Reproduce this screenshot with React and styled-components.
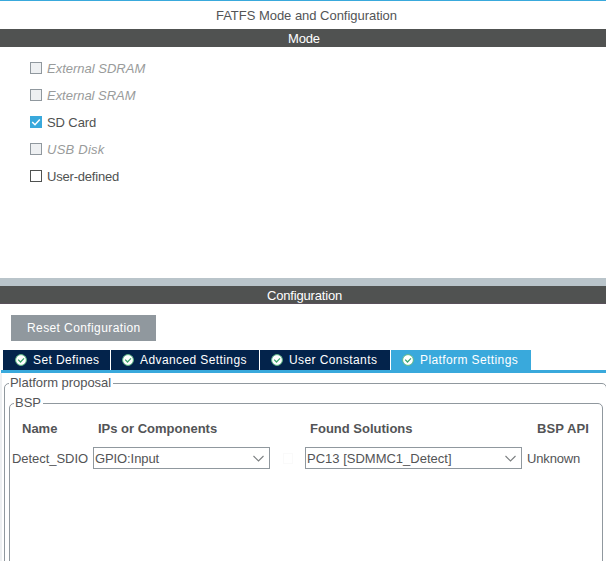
import React from 'react';
import styled, { createGlobalStyle } from 'styled-components';

const GlobalStyle = createGlobalStyle`
  * { box-sizing: border-box; }
  body {
    margin: 0;
    background: #fff;
    color: #535456;
    font: 13px/16px "Liberation Sans", Arial, sans-serif;
    overflow: hidden;
  }
`;

const Window = styled.main`
  display: flex;
  flex-direction: column;
  width: 606px;
  height: 561px;
  overflow: hidden;
  border-top: 1px solid #39a9dc;
  white-space: nowrap;
`;

const Text = styled.span`
  letter-spacing: ${(p) => p.$spacing || 0}px;
`;

const Title = styled.h1`
  margin: 0;
  height: 28px;
  padding: 7px 0 0 216px;
  font-size: 13px;
  font-weight: normal;
`;

const SectionBar = styled.h2`
  margin: 0;
  height: 18px;
  flex: none;
  padding-left: ${(p) => p.$indent}px;
  border-bottom: 1px solid ${(p) => p.$edge || '#505251'};
  background: #505251;
  color: #fff;
  font-size: 13px;
  line-height: 19px;
  font-weight: normal;
`;

const ModeList = styled.section`
  display: flex;
  flex-direction: column;
  height: 231px;
  padding: 8px 0 0 30px;
`;

const Option = styled.label`
  display: flex;
  align-items: center;
  gap: 5px;
  height: 27px;
  color: ${(p) => (p.$disabled ? '#999b9b' : '#505251')};
  font-style: ${(p) => (p.$disabled ? 'italic' : 'normal')};
`;

const Box = styled.span`
  display: flex;
  width: 12px;
  height: 12px;
  margin-bottom: 2px;
  border: 1px solid ${(p) => (p.$checked ? '#39a9dc' : p.$disabled ? '#90989e' : '#505251')};
  background: ${(p) => (p.$checked ? '#39a9dc' : p.$disabled ? '#eef0f2' : '#fff')};
`;

const Splitter = styled.div`
  height: 8px;
  flex: none;
  background: #b9c4ca;
`;

const ResetButton = styled.button`
  width: 145px;
  height: 26px;
  flex: none;
  margin: 11px 0 9px 11px;
  padding: 0 0 0 16px;
  border: 0;
  background: #90989e;
  color: #fff;
  font: 12px/27px "Liberation Sans", Arial, sans-serif;
  text-align: left;
`;

const Tabs = styled.nav`
  display: flex;
  gap: 1px;
  flex: none;
  height: 23px;
  margin-left: 1px;
  padding-left: 2px;
  border-bottom: 3px solid #39a9dc;
`;

const Tab = styled.div`
  display: flex;
  align-items: center;
  gap: 6px;
  width: ${(p) => p.$width}px;
  height: 20px;
  padding-left: 11px;
  background: ${(p) => (p.$active ? '#39a9dc' : '#03234b')};
  color: #fff;
  font-size: 12px;

  &:first-child {
    padding-left: 12px;
  }
`;

const Panel = styled.section`
  flex: 1;
  min-height: 0;
  width: 608px;
  padding: 2px 0 0 2px;
  border-left: 2px solid #eef0f2;
`;

const Group = styled.fieldset`
  min-width: 0;
  width: ${(p) => p.$width}px;
  height: 200px;
  margin: 0;
  padding: ${(p) => p.$pad};
  border: 1px solid #90989e;
  border-radius: 5px;

  > legend {
    padding: 0 2px 0 1px;
    margin-left: ${(p) => p.$legendIndent}px;
    height: 16px;
  }
`;

const Table = styled.div`
  display: grid;
  grid-template-columns: 81px 212px 222px auto;
`;

const HeadCell = styled.div`
  height: 28px;
  padding-left: ${(p) => p.$indent}px;
  line-height: 20px;
  font-weight: bold;
`;

const Cell = styled.div`
  display: flex;
  align-items: center;
  height: 22px;
  line-height: 20px;

  ${Text} {
    padding-top: 2px;
  }
`;

const Combo = styled.div`
  display: flex;
  align-items: center;
  justify-content: space-between;
  width: ${(p) => p.$width}px;
  height: 22px;
  padding: 0 5px 0 1px;
  border: 1px solid #90989e;
`;

const Placeholder = styled.span`
  width: 10px;
  height: 11px;
  margin-left: 13px;
  border: 1px solid #fafafa;
`;

const Tick = () => (
  <svg width="10" height="10" viewBox="0 0 10 10" fill="none" stroke="#fff" strokeWidth="1.5">
    <path d="M1.2 5 4 7.7 8.8 2.5" />
  </svg>
);

const Valid = () => (
  <svg width="12" height="12" viewBox="0 0 12 12" fill="none">
    <circle cx="6" cy="6" r="5.4" fill="#fff" stroke="#5eb985" strokeWidth="1" />
    <path d="M3.2 5.6 5.5 8 9 4.4" stroke="#3ba66b" strokeWidth="1.3" />
  </svg>
);

const Chevron = () => (
  <svg width="11" height="7" viewBox="0 0 11 7" fill="none" stroke="#7b7f80" strokeWidth="1.1">
    <path d="M.5 1 5.5 6 10.5 1" />
  </svg>
);

const options = [
  { label: 'External SDRAM', disabled: true, spacing: 0 },
  { label: 'External SRAM', disabled: true, spacing: -0.03 },
  { label: 'SD Card', checked: true, spacing: -0.1 },
  { label: 'USB Disk', disabled: true, spacing: 0.25 },
  { label: 'User-defined', spacing: -0.2 },
];

const tabs = [
  { label: 'Set Defines', width: 107 },
  { label: 'Advanced Settings', width: 148 },
  { label: 'User Constants', width: 130 },
  { label: 'Platform Settings', width: 140, active: true },
];

export default function App() {
  return (
    <>
      <GlobalStyle />
      <Window>
        <Title><Text $spacing={-0.03}>FATFS Mode and Configuration</Text></Title>
        <SectionBar $indent={288}><Text $spacing={-0.15}>Mode</Text></SectionBar>
        <ModeList>
          {options.map((o) => (
            <Option key={o.label} $disabled={o.disabled}>
              <Box $disabled={o.disabled} $checked={o.checked}>{o.checked && <Tick />}</Box>
              <Text $spacing={o.spacing}>{o.label}</Text>
            </Option>
          ))}
        </ModeList>
        <Splitter />
        <SectionBar $indent={267} $edge="#59505a"><Text $spacing={-0.17}>Configuration</Text></SectionBar>
        <ResetButton><Text $spacing={0.4}>Reset Configuration</Text></ResetButton>
        <Tabs>
          {tabs.map((t) => (
            <Tab key={t.label} $width={t.width} $active={t.active}>
              <Valid />
              <Text $spacing={0.4}>{t.label}</Text>
            </Tab>
          ))}
        </Tabs>
        <Panel>
          <Group $width={603} $pad="4px 0 0 4px" $legendIndent={0}>
            <legend><Text $spacing={-0.05}>Platform proposal</Text></legend>
            <Group $width={594} $pad="8px 0 0 2px" $legendIndent={2}>
              <legend><Text>BSP</Text></legend>
              <Table>
                <HeadCell $indent={10}><Text>Name</Text></HeadCell>
                <HeadCell $indent={5}><Text>IPs or Components</Text></HeadCell>
                <HeadCell $indent={5}><Text>Found Solutions</Text></HeadCell>
                <HeadCell $indent={10}><Text $spacing={0.1}>BSP API</Text></HeadCell>
                <Cell><Text $spacing={-0.05}>Detect_SDIO</Text></Cell>
                <Cell>
                  <Combo $width={177}><Text $spacing={-0.1}>GPIO:Input</Text><Chevron /></Combo>
                  <Placeholder />
                </Cell>
                <Cell><Combo $width={217}><Text>PC13 [SDMMC1_Detect]</Text><Chevron /></Combo></Cell>
                <Cell><Text $spacing={-0.15}>Unknown</Text></Cell>
              </Table>
            </Group>
          </Group>
        </Panel>
      </Window>
    </>
  );
}
